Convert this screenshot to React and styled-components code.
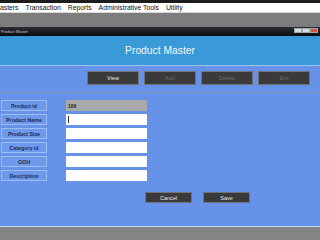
import React from "react";
import styled, { createGlobalStyle } from "styled-components";

const Global = createGlobalStyle`
  html, body { margin: 0; padding: 0; width: 320px; height: 240px; overflow: hidden; background: #808080; }
  body { font-family: "Liberation Sans", Arial, sans-serif; }
  * { box-sizing: border-box; }
`;

const Screen = styled.div`
  width: 320px;
  height: 240px;
  display: flex;
  flex-direction: column;
  overflow: hidden;
  background: #848484;
`;

const AppStrip = styled.div`
  height: 3px;
  background: #1c1c1c;
`;

const MenuBar = styled.div`
  height: 10px;
  background: #ffffff;
  display: flex;
  align-items: center;
  gap: 7px;
  overflow: hidden;
  font-size: 6.8px;
  color: #111;
  white-space: nowrap;
  border-bottom: 1px solid #d8d8d8;
`;

const MenuItem = styled.span``;

const GrayBand = styled.div`
  height: 14px;
  background: #7d7d7d;
`;

const WinTitle = styled.div`
  height: 9px;
  background: linear-gradient(#2a2d33, #0b0c0f);
  display: flex;
  align-items: center;
  justify-content: space-between;
  padding: 0 2px 0 1px;
  font-size: 4px;
  color: #c9c9c9;
`;

const WinButtons = styled.div`
  display: flex;
  height: 5px;
  margin-top: -2px;
`;

const WinBtn = styled.div`
  width: ${(p) => p.$w}px;
  height: 5px;
  background: ${(p) => p.$bg};
  border: 0.5px solid #9aa;
`;

const Header = styled.div`
  height: 30px;
  background: #3a9ad8;
  display: flex;
  align-items: center;
  justify-content: center;
  color: #f2f6fb;
  font-size: 10.3px;
  border-bottom: 1px solid #9cc3ee;
`;

const Body = styled.div`
  height: 161px;
  background: #6693e8;
  display: flex;
  flex-direction: column;
  border-bottom: 1px solid #c5d5ee;
`;

const Toolbar = styled.div`
  display: flex;
  justify-content: flex-end;
  gap: 5px;
  padding: 5px 10px 0 0;
`;

const DarkButton = styled.div`
  width: ${(p) => p.$w}px;
  height: ${(p) => p.$h}px;
  background: #3a3a3a;
  border: 1px solid #6f7378;
  display: flex;
  align-items: center;
  justify-content: center;
  font-size: 5.5px;
  color: ${(p) => (p.$disabled ? "#6c6c6c" : "#e8e8e8")};
`;

const Rule = styled.div`
  height: 1px;
  background: #8695b3;
  margin-top: 7px;
`;

const Form = styled.div`
  display: flex;
  flex-direction: column;
  gap: 3px;
  padding: 7px 0 0 1px;
`;

const Row = styled.div`
  display: flex;
  align-items: center;
  gap: 19px;
  height: 11px;
`;

const Label = styled.div`
  width: 46px;
  height: 11px;
  background: #6c99ea;
  border: 1px solid #9dbcf2;
  display: flex;
  align-items: center;
  justify-content: center;
  font-size: 5.3px;
  font-weight: bold;
  color: #1d2a55;
`;

const Field = styled.div`
  width: 81px;
  height: 11px;
  background: ${(p) => (p.$readonly ? "#a8a8a8" : "#ffffff")};
  display: flex;
  align-items: center;
  padding-left: 2px;
  font-size: 5px;
  font-weight: bold;
  color: #222;
`;

const Caret = styled.span`
  width: 1px;
  height: 7px;
  background: #333;
`;

const Actions = styled.div`
  display: flex;
  gap: 11px;
  padding: 11px 0 0 145px;
`;

const labels = ["Product id", "Product Name", "Product Size", "Category id", "GOH", "Description"];

export default function App() {
  return (
    <Screen>
      <Global />
      <AppStrip />
      <MenuBar>
        <MenuItem>asters</MenuItem>
        <MenuItem>Transaction</MenuItem>
        <MenuItem>Reports</MenuItem>
        <MenuItem>Administrative Tools</MenuItem>
        <MenuItem>Utility</MenuItem>
      </MenuBar>
      <GrayBand />
      <WinTitle>
        <span>Product Master</span>
        <WinButtons>
          <WinBtn $w={8} $bg="#d9dde3" />
          <WinBtn $w={8} $bg="#d9dde3" />
          <WinBtn $w={8} $bg="#d8513f" />
        </WinButtons>
      </WinTitle>
      <Header>Product Master</Header>
      <Body>
        <Toolbar>
          <DarkButton $w={52} $h={14}>View</DarkButton>
          <DarkButton $w={52} $h={14} $disabled>Add</DarkButton>
          <DarkButton $w={52} $h={14} $disabled>Delete</DarkButton>
          <DarkButton $w={52} $h={14} $disabled>Exit</DarkButton>
        </Toolbar>
        <Rule />
        <Form>
          {labels.map((l, i) => (
            <Row key={l}>
              <Label>{l}</Label>
              <Field $readonly={i === 0}>
                {i === 0 ? "106" : i === 1 ? <Caret /> : null}
              </Field>
            </Row>
          ))}
        </Form>
        <Actions>
          <DarkButton $w={47} $h={11}>Cancel</DarkButton>
          <DarkButton $w={47} $h={11}>Save</DarkButton>
        </Actions>
      </Body>
    </Screen>
  );
}
